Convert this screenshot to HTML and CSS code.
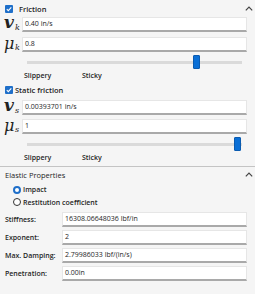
FILE: index.html
```html
<!DOCTYPE html>
<html>
<head>
<meta charset="utf-8">
<link rel="stylesheet" href="styles.css">
</head>
<body>
<div class="panel">
  <div class="hdr hdr-first">
    <span class="cb"><svg viewBox="0 0 8 8" width="8" height="8"><path d="M1.8 4.2 L3.3 5.7 L6.3 2.4" fill="none" stroke="#fff" stroke-width="1.1"/></svg></span>
    <span class="hdr-text">Friction</span>
    <svg class="caret" viewBox="0 0 8 5" width="8" height="5"><polyline points="0.8,4.3 4,1 7.2,4.3" fill="none" stroke="#444" stroke-width="1.2"/></svg>
  </div>
  <div class="row">
    <span class="sym"><i class="v">v</i><sub>k</sub></span>
    <div class="inp">0.40 in/s</div>
  </div>
  <div class="row gap5">
    <span class="sym"><i class="mu">μ</i><sub>k</sub></span>
    <div class="inp">0.8</div>
  </div>
  <div class="slider"><div class="track"></div><div class="thumb" style="left:166px"></div></div>
  <div class="marks"><span class="m1">Slippery</span><span class="m2">Sticky</span></div>

  <div class="hdr hdr-static">
    <span class="cb"><svg viewBox="0 0 8 8" width="8" height="8"><path d="M1.8 4.2 L3.3 5.7 L6.3 2.4" fill="none" stroke="#fff" stroke-width="1.1"/></svg></span>
    <span class="hdr-text">Static friction</span>
  </div>
  <div class="row">
    <span class="sym"><i class="v">v</i><sub>s</sub></span>
    <div class="inp">0.00393701 in/s</div>
  </div>
  <div class="row gap4">
    <span class="sym"><i class="mu">μ</i><sub>s</sub></span>
    <div class="inp">1</div>
  </div>
  <div class="slider"><div class="track"></div><div class="thumb" style="left:207px"></div></div>
  <div class="marks"><span class="m1">Slippery</span><span class="m2">Sticky</span></div>
</div>
<div class="sep"></div>
<div class="panel elastic">
  <div class="hdr hdr-elastic">
    <span class="plain">Elastic Properties</span>
    <svg class="caret" viewBox="0 0 8 5" width="8" height="5"><polyline points="0.8,4.3 4,1 7.2,4.3" fill="none" stroke="#444" stroke-width="1.2"/></svg>
  </div>
  <div class="radio"><span class="rb on"></span><span class="lbl">Impact</span></div>
  <div class="radio"><span class="rb"></span><span class="lbl">Restitution coefficient</span></div>
  <div class="fields">
    <div class="field"><span class="flbl">Stiffness:</span><div class="inp">16308.06648036 lbf/in</div></div>
    <div class="field"><span class="flbl">Exponent:</span><div class="inp">2</div></div>
    <div class="field"><span class="flbl">Max. Damping:</span><div class="inp">2.79986033 lbf/(in/s)</div></div>
    <div class="field"><span class="flbl">Penetration:</span><div class="inp">0.00in</div></div>
  </div>
</div>
</body>
</html>
```
FILE: styles.css
```css
* { box-sizing: border-box; }
html, body { margin: 0; padding: 0; }
body {
  width: 255px;
  height: 294px;
  background: #f5f5f5;
  font-family: "Open Sans", "Noto Sans", sans-serif;
  font-size: 7px;
  color: #1e1e1e;
  overflow: hidden;
}
.panel { padding: 0 8px 0 4px; }
.hdr {
  display: flex;
  align-items: center;
  position: relative;
}
.hdr-first { height: 17px; }
.hdr-static { height: 14px; margin-top: 1px; margin-bottom: 3px; }
.cb {
  width: 8px;
  height: 8px;
  background: #1f6fc9;
  border-radius: 1px;
  display: inline-flex;
  margin-left: 1px;
}
.cb svg { display: block; }
.hdr-text { font-weight: 600; margin-left: 6px; font-size: 7.5px; }
.hdr-static .hdr-text { margin-left: 2px; }
.caret { position: absolute; right: -6px; top: 6px; }
.row {
  display: flex;
  align-items: center;
  height: 15px;
}
.gap5 { margin-top: 5px; }
.gap4 { margin-top: 4px; }
.sym {
  width: 18px;
  height: 15px;
  position: relative;
  font-family: "DejaVu Serif", "Liberation Serif", serif;
  color: #222;
}
.sym i {
  position: absolute;
  left: 0px;
  top: -4px;
  font-weight: bold;
  font-style: italic;
  font-size: 17px;
  line-height: 19px;
}
.sym i.mu { font-size: 16px; font-weight: normal; top: -3px; left: 0px; }
.sym sub {
  position: absolute;
  left: 11px;
  top: 7px;
  font-size: 8px;
  font-style: italic;
  line-height: 8px;
}
.inp {
  flex: 1;
  height: 15px;
  background: #fff;
  border: 1px solid #e6e6e6;
  border-bottom: 2px solid #a9a9a9;
  padding-left: 2px;
  line-height: 12px;
  font-weight: 400;
  white-space: nowrap;
  overflow: hidden;
}
.slider {
  position: relative;
  height: 18px;
  margin-left: 23px;
  margin-right: 5px;
}
.track {
  position: absolute;
  left: 0;
  right: 0;
  top: 9px;
  height: 3px;
  background: #dadada;
}
.thumb {
  position: absolute;
  top: 3px;
  width: 7px;
  height: 14px;
  background: #0a6fd6;
  border: 1px solid #0a5bb0;
  border-radius: 1px;
}
.marks {
  display: flex;
  height: 12px;
  line-height: 12px;
  font-weight: 600;
}
.m1 { margin-left: 20px; width: 58px; }
.sep {
  height: 1px;
  background: #c4c4c4;
  margin-top: 2px;
}
.elastic { padding-left: 5px; }
.hdr-elastic { height: 16px; }
.hdr-elastic .caret { top: 5px; }
.plain { font-weight: 500; font-size: 7.5px; }
.radio {
  display: flex;
  align-items: center;
  height: 13px;
  font-weight: 600;
}
.radio + .radio { height: 12px; }
.rb {
  width: 8px;
  height: 8px;
  border-radius: 50%;
  border: 1px solid #333;
  background: #fff;
  margin-left: 8px;
  margin-right: 2px;
}
.rb.on { border: 2.5px solid #1f6fc9; }
.fields {
  display: flex;
  flex-direction: column;
  gap: 3px;
  margin-top: 4px;
}
.field {
  display: flex;
  align-items: center;
  height: 15px;
}
.flbl { width: 57px; font-weight: 600; }
```
